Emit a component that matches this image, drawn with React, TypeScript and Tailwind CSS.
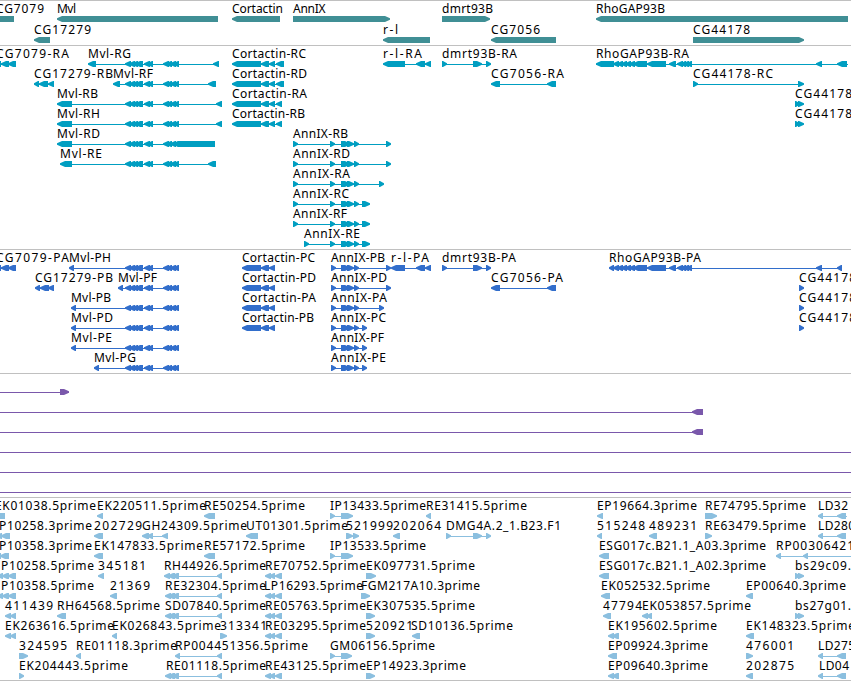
type Exon = [number, number];
// label, label start, label end, row, strand, exons, optional extent of the connecting line
type Feature = [string, number, number, number, "<" | ">", Exon[], Exon?];

const MVL: Exon[] = [[125, 131], [129, 135], [132, 138], [135, 143], [144, 150], [147, 153], [163, 169], [166, 172], [170, 176], [173, 179]];
const RHO: Exon[] = [[613, 619], [617, 623], [621, 627], [625, 631], [629, 635], [633, 647], [647, 666], [669, 676], [677, 683], [681, 686], [683, 689], [686, 692], [816, 822]];
const ANN: Exon[] = [[341, 350], [347, 354], [354, 359]];
const CORT: Exon[] = [[261, 269], [269, 275]];
const CG7079: Exon[] = [[-5, 1], [1, 9], [8, 16]];
const DMRT: Exon[] = [[442, 447], [473, 482], [486, 491]];
const RE: Exon[] = [[165, 171], [168, 175], [172, 179], [217, 222]];
const RE2: Exon[] = [[265, 271], [269, 275], [275, 282]];
const LD: Exon[] = [[818, 823], [837, 846]];

const genes: Feature[] = [
  ["CG7079", -4, 44, 0, "<", [[-5, 14]]],
  ["Mvl", 57, 76, 0, "<", [[57, 218]]],
  ["CG17279", 34, 91, 1, "<", [[34, 50]]],
  ["Cortactin", 232, 283, 0, "<", [[232, 280]]],
  ["AnnIX", 293, 325.5, 0, ">", [[293, 390]]],
  ["r-l", 383, 398, 1, "<", [[383, 430]]],
  ["dmrt93B", 442, 493, 0, ">", [[442, 490]]],
  ["CG7056", 491, 540, 1, "<", [[491, 556]]],
  ["RhoGAP93B", 596, 665, 0, "<", [[596, 848]]],
  ["CG44178", 693, 750, 1, ">", [[693, 804]]],
];

const transcripts: Feature[] = [
  ["CG7079-RA", -4, 69, 0, "<", CG7079],
  ["Mvl-RG", 88, 131, 0, "<", [[88, 96], ...MVL, [213, 219]]],
  ["CG17279-RB", 34, 113, 1, "<", [[34, 39], [39, 48], [48, 54]]],
  ["Mvl-RF", 113, 153, 1, "<", [[113, 120], ...MVL, [208, 216]]],
  ["Mvl-RB", 57, 98, 2, "<", [[57, 72], ...MVL, [216, 222]]],
  ["Mvl-RH", 57, 100, 3, "<", [[57, 72], ...MVL, [216, 222]]],
  ["Mvl-RD", 57, 100, 4, "<", [[57, 72], ...MVL, [174, 215]]],
  ["Mvl-RE", 60, 102, 5, "<", [[60, 72], ...MVL, [208, 216]]],
  ["Cortactin-RC", 232, 306, 0, "<", [[232, 261], ...CORT, [276, 284]]],
  ["Cortactin-RD", 232, 307, 1, "<", [[232, 261], ...CORT, [276, 284]]],
  ["Cortactin-RA", 232, 307, 2, "<", [[232, 261], ...CORT, [276, 282]]],
  ["Cortactin-RB", 232, 305, 3, "<", [[232, 261], ...CORT, [276, 282]]],
  ["AnnIX-RB", 293, 348, 4, ">", [[293, 298], [330, 335], ...ANN, [386, 391]]],
  ["AnnIX-RD", 293, 350, 5, ">", [[293, 298], [330, 335], ...ANN, [386, 391]]],
  ["AnnIX-RA", 293, 350, 6, ">", [[293, 298], [330, 335], ...ANN, [379, 384]]],
  ["AnnIX-RC", 293, 349, 7, ">", [[293, 298], [330, 335], ...ANN, [362, 370]]],
  ["AnnIX-RF", 293, 347, 8, ">", [[293, 298], [330, 335], ...ANN, [362, 370]]],
  ["AnnIX-RE", 304, 360, 9, ">", [[304, 309], [330, 335], ...ANN, [362, 370]]],
  ["r-l-RA", 383, 422, 0, "<", [[383, 405], [416, 425], [425, 431]]],
  ["dmrt93B-RA", 442, 517, 0, ">", DMRT],
  ["CG7056-RA", 491, 564, 1, "<", [[491, 500], [547, 556]]],
  ["RhoGAP93B-RA", 596, 689, 0, "<", [[596, 614], ...RHO, [837, 847]], [596, 848]],
  ["CG44178-RC", 693, 773, 1, ">", [[693, 698], [798, 804]]],
  ["CG44178", 795, 852, 2, ">", [[795, 800], [798, 804]]],
  ["CG44178", 795, 852, 3, ">", [[795, 800], [798, 804]]],
];

const proteins: Feature[] = [
  ["CG7079-PA", -4, 69, 0, "<", CG7079],
  ["Mvl-PH", 69, 111, 0, "<", [[69, 74], ...MVL]],
  ["CG17279-PB", 35, 113, 1, "<", [[35, 40], [40, 49], [48, 54]]],
  ["Mvl-PF", 118, 157, 1, "<", [[118, 123], ...MVL]],
  ["Mvl-PB", 71, 111, 2, "<", [[71, 76], ...MVL]],
  ["Mvl-PD", 71, 113, 3, "<", [[71, 76], ...MVL]],
  ["Mvl-PE", 71, 112, 4, "<", [[71, 76], ...MVL]],
  ["Mvl-PG", 94, 136, 5, "<", [[94, 99], ...MVL]],
  ["Cortactin-PC", 242, 315, 0, "<", [[242, 261], ...CORT]],
  ["Cortactin-PD", 242, 316, 1, "<", [[242, 261], ...CORT]],
  ["Cortactin-PA", 242, 316, 2, "<", [[242, 261], ...CORT]],
  ["Cortactin-PB", 242, 314, 3, "<", [[242, 261], ...CORT]],
  ["AnnIX-PB", 331, 385, 0, ">", [[331, 336], ...ANN, [386, 391]]],
  ["AnnIX-PD", 331, 387, 1, ">", [[331, 336], ...ANN, [386, 391]]],
  ["AnnIX-PA", 331, 387, 2, ">", [[331, 336], ...ANN, [379, 384]]],
  ["AnnIX-PC", 331, 386, 3, ">", [[331, 336], ...ANN, [362, 367]]],
  ["AnnIX-PF", 331, 384, 4, ">", [[331, 336], ...ANN, [362, 367]]],
  ["AnnIX-PE", 331, 386, 5, ">", [[331, 336], ...ANN, [362, 367]]],
  ["r-l-PA", 391, 429, 0, "<", [[391, 405], [416, 425], [425, 431]]],
  ["dmrt93B-PA", 442, 516, 0, ">", DMRT],
  ["CG7056-PA", 491, 563, 1, "<", [[491, 500], [547, 556]]],
  ["RhoGAP93B-PA", 609, 701, 0, "<", [[609, 614], ...RHO, [837, 842]]],
  ["CG44178", 799, 856, 1, ">", [[799, 804]]],
  ["CG44178", 799, 856, 2, ">", [[799, 804]]],
  ["CG44178", 799, 856, 3, ">", [[799, 804]]],
];

const insertions: Feature[] = [
  ["", 0, 0, 0, ">", [[60, 69]], [0, 69]],
  ["", 0, 0, 1, "<", [[692, 703]], [0, 703]],
  ["", 0, 0, 2, "<", [[692, 703]], [0, 703]],
  ["", 0, 0, 3, "<", [], [0, 851]],
  ["", 0, 0, 4, "<", [], [0, 851]],
  ["", 0, 0, 5, "<", [], [0, 851]],
];

const ests: Feature[] = [
  ["EK01038.5prime", -5, 96, 0, "<", [[-6, 5]]],
  ["EK220511.5prime", 97, 206, 0, "<", [[97, 103]]],
  ["RE50254.5prime", 204, 305, 0, "<", [[204, 215]]],
  ["IP13433.5prime", 330, 426, 0, ">", [[330, 335], [341, 353]]],
  ["RE31415.5prime", 426, 527, 0, "<", [[426, 431]]],
  ["EP19664.3prime", 597, 697, 0, "<", [[597, 603]]],
  ["RE74795.5prime", 705, 806, 0, ">", [[705, 717]]],
  ["LD32", 818, 848, 0, "<", LD, [818, 847]],
  ["P10258.3prime", -1, 92, 1, "<", [[-4, 2], [1, 10]]],
  ["202729", 94, 142, 1, "<", [[94, 103]]],
  ["GH24309.5prime", 142, 247, 1, "<", [[142, 149], [147, 153], [162, 168]]],
  ["UT01301.5prime", 246, 348, 1, "<", [[246, 258]]],
  ["521999", 346, 393, 1, ">", [[346, 353], [353, 359]]],
  ["202064", 393, 441, 1, "<", [[393, 400]]],
  ["DMG4A.2_1.B23.F1", 446, 561, 1, ">", [[446, 451], [473, 482], [486, 491]]],
  ["515248", 597, 645, 1, "<", [[597, 602]]],
  ["489231", 649, 697, 1, "<", [[649, 657]]],
  ["RE63479.5prime", 705, 806, 1, ">", [[705, 712]]],
  ["LD280", 818, 855, 1, "<", LD],
  ["P10358.3prime", -1, 92, 2, "<", [[-5, 1], [0, 9]]],
  ["EK147833.5prime", 94, 203, 2, "<", [[94, 103]]],
  ["RE57172.5prime", 204, 305, 2, "<", [[204, 215]]],
  ["IP13533.5prime", 330, 426, 2, ">", [[330, 335], [341, 353]]],
  ["ESG017c.B21.1_A03.3prime", 599, 766, 2, "<", [[599, 609]]],
  ["RP00306421", 776, 854, 2, "<", [[776, 781], [803, 808]], [776, 851]],
  ["P10258.5prime", 1, 94, 3, "<", [[-3, 3], [2, 9], [8, 16]]],
  ["345181", 98, 146, 3, "<", [[98, 104]]],
  ["RH44926.5prime", 164, 266, 3, "<", [[164, 170], ...RE.slice(1)]],
  ["RE70752.5prime", 265, 366, 3, "<", RE2],
  ["EK097731.5prime", 366, 475, 3, ">", [[366, 376]]],
  ["ESG017c.B21.1_A02.3prime", 599, 766, 3, "<", [[599, 609]]],
  ["bs29c09.", 795, 851, 3, ">", [[795, 800], [798, 804]]],
  ["P10358.5prime", 1, 94, 4, "<", [[-3, 3], [2, 9], [8, 16]]],
  ["21369", 110, 150, 4, "<", [[110, 117]]],
  ["RE32304.5prime", 165, 266, 4, "<", RE],
  ["LP16293.5prime", 264, 363, 4, "<", RE2],
  ["FGM217A10.3prime", 361, 480, 4, ">", [[361, 370]]],
  ["EK052532.5prime", 601, 710, 4, "<", [[601, 610]]],
  ["EP00640.3prime", 746, 846, 4, "<", [[746, 753]]],
  ["411439", 5, 53, 5, "<", [[5, 11], [10, 16]]],
  ["RH64568.5prime", 57, 160, 5, "<", [[57, 66]]],
  ["SD07840.5prime", 165, 266, 5, "<", RE],
  ["RE05763.5prime", 265, 366, 5, "<", RE2],
  ["EK307535.5prime", 366, 475, 5, ">", [[366, 375]]],
  ["47794", 603, 642, 5, "<", [[603, 611]]],
  ["EK053857.5prime", 642, 751, 5, "<", [[642, 648], [646, 652]]],
  ["bs27g01.", 795, 851, 5, ">", [[795, 800], [798, 804]]],
  ["EK263616.5prime", 5, 114, 6, "<", [[5, 11], [10, 16]]],
  ["EK026843.5prime", 112, 221, 6, "<", [[112, 117]]],
  ["313341", 220, 267, 6, ">", [[220, 227]]],
  ["RE03295.5prime", 265, 366, 6, "<", RE2],
  ["520921", 366, 413, 6, ">", [[366, 375]]],
  ["SD10136.5prime", 411, 513, 6, "<", [[412, 420]]],
  ["EK195602.5prime", 608, 717, 6, "<", [[608, 614], [612, 619]]],
  ["EK148323.5prime", 746, 855, 6, "<", [[746, 754]]],
  ["324595", 19, 67, 7, ">", [[19, 28]]],
  ["RE01118.3prime", 76, 177, 7, "<", [[76, 81]]],
  ["RP004451356.5prime", 175, 308, 7, "<", [[175, 180], [217, 222]]],
  ["GM06156.5prime", 330, 435, 7, ">", [[330, 335], [341, 352]]],
  ["EP09924.3prime", 608, 708, 7, "<", [[608, 617]]],
  ["476001", 746, 794, 7, ">", [[746, 753]]],
  ["LD275", 818, 855, 7, "<", LD],
  ["EK204443.5prime", 19, 128, 8, ">", [[19, 24]]],
  ["RE01118.5prime", 166, 266, 8, "<", RE],
  ["RE43125.5prime", 265, 366, 8, "<", RE2],
  ["EP14923.3prime", 366, 466, 8, ">", [[366, 375]]],
  ["EP09640.3prime", 608, 708, 8, "<", [[608, 614], [612, 619]]],
  ["202875", 746, 794, 8, "<", [[746, 753]]],
  ["LD04", 819, 849, 8, "<", LD],
];

// An exon is a block whose leading end tapers to a one-pixel tip.
function exonPoints([a, b]: Exon, strand: string, y: number) {
  const w = b - a;
  const head = w > 6 ? 5 : w - 1;
  const top = y - 3;
  const bottom = y + 3;
  return strand === "<"
    ? `${a},${y - 0.7} ${a + head},${top} ${b},${top} ${b},${bottom} ${a + head},${bottom} ${a},${y + 0.7}`
    : `${b},${y - 0.7} ${b - head},${top} ${a},${top} ${a},${bottom} ${b - head},${bottom} ${b},${y + 0.7}`;
}

type TrackProps = { features: Feature[]; first: number; pitch?: number; height: string; color: string };

// One horizontal band of the browser; `first` is the centre line of its top row.
function Track({ features, first, pitch = 20, height, color }: TrackProps) {
  return (
    <section className={`w-full shrink-0 overflow-hidden border-t border-[#c0c0c0] ${height} ${color}`}>
      <svg width="851" height="100%" className="block">
        {features.map(([label, x, end, row, strand, exons, extent], i) => {
          const y = first + row * pitch;
          const from = extent ? extent[0] : exons[0][0] + 2;
          const to = extent ? extent[1] : exons[exons.length - 1][1] - 2;
          return (
            <g key={i}>
              <rect x={from} y={y} width={to - from} height="1" fill="currentColor" />
              {exons.map((e, k) => (
                <polygon key={k} points={exonPoints(e, strand, y)} fill="currentColor" />
              ))}
              {label && (
                <text x={x} y={y - 6} textLength={end - x} lengthAdjust="spacing" className="fill-black">
                  {label}
                </text>
              )}
            </g>
          );
        })}
      </svg>
    </section>
  );
}

export default function App() {
  return (
    <main className="flex h-[681px] w-[851px] flex-col overflow-hidden border-b border-[#c0c0c0] bg-white font-['Noto_Sans','DejaVu_Sans',sans-serif] text-[12px]">
      <Track features={genes} first={18} pitch={21} height="h-[45px]" color="text-[#408f95]" />
      <Track features={transcripts} first={18} height="h-[204px]" color="text-[#009ec1]" />
      <Track features={proteins} first={18} height="h-[124px]" color="text-[#326ecb]" />
      <Track features={insertions} first={18} height="h-[124px]" color="text-[#7a58ab]" />
      <Track features={ests} first={18} height="h-[183px]" color="text-[#8bbfdf]" />
    </main>
  );
}
